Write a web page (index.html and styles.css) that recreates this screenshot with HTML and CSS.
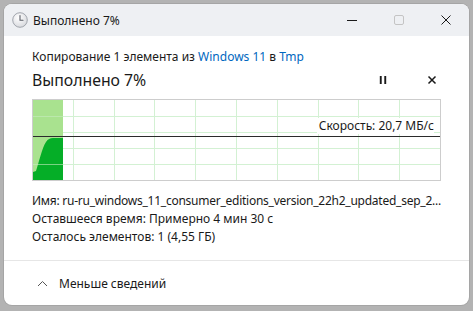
FILE: index.html
```html
<!DOCTYPE html>
<html lang="ru">
<head>
  <meta charset="UTF-8">
  <title>Выполнено 7%</title>
  <link rel="stylesheet" href="styles.css">
</head>
<body>
  <div class="window">
    <!-- Title bar -->
    <div class="titlebar">
      <svg class="app-icon" width="16" height="16" viewBox="0 0 16 16">
        <defs>
          <radialGradient id="face" cx="40%" cy="35%" r="70%">
            <stop offset="0" stop-color="#ffffff"/>
            <stop offset="1" stop-color="#d6d8dc"/>
          </radialGradient>
        </defs>
        <circle cx="8" cy="8" r="7.3" fill="url(#face)" stroke="#9a9ea6" stroke-width="0.9"/>
        <path d="M8 3.6V8.3H11" fill="none" stroke="#5a5e66" stroke-width="1.1" stroke-linecap="round"/>
      </svg>
      <span class="title">Выполнено 7%</span>
      <div class="caption-buttons">
        <span class="cap-btn">
          <svg width="10" height="10" viewBox="0 0 10 10"><path d="M0 5.5H10" stroke="#1a1a1a" stroke-width="1"/></svg>
        </span>
        <span class="cap-btn">
          <svg width="10" height="10" viewBox="0 0 10 10"><rect x="0.5" y="0.5" width="9" height="9" rx="1.5" fill="none" stroke="#c4c4c4" stroke-width="1"/></svg>
        </span>
        <span class="cap-btn">
          <svg width="10" height="10" viewBox="0 0 10 10"><path d="M0.5 0.5L9.5 9.5M9.5 0.5L0.5 9.5" stroke="#1a1a1a" stroke-width="1"/></svg>
        </span>
      </div>
    </div>

    <!-- Copy progress -->
    <div class="content">
      <p class="source">Копирование 1 элемента из <span class="link">Windows 11</span> в <span class="link">Tmp</span></p>
      <div class="heading-row">
        <h1 class="heading">Выполнено 7%</h1>
        <div class="actions">
          <svg width="10" height="10" viewBox="0 0 10 10"><rect x="1.8" y="1" width="1.9" height="8" fill="#1a1a1a"/><rect x="6.3" y="1" width="1.9" height="8" fill="#1a1a1a"/></svg>
          <svg width="10" height="10" viewBox="0 0 10 10"><path d="M1.5 1.5L8.5 8.5M8.5 1.5L1.5 8.5" stroke="#1a1a1a" stroke-width="1.5"/></svg>
        </div>
      </div>

      <div class="graph">
        <svg class="graph-canvas" width="407" height="80" viewBox="0 0 407 80">
          <rect x="0" y="0" width="30" height="80" fill="#a9e28f"/>
          <path d="M0 80V72L3 71C6 62 9 48 13 42C15 39 17 38 20 38L30 38V80Z" fill="#05ae27"/>
          <g stroke="#d3f1d3" stroke-width="1">
            <path d="M40.5 0V80M81.5 0V80M121.5 0V80M162.5 0V80M203.5 0V80M244.5 0V80M285.5 0V80M325.5 0V80M366.5 0V80"/>
            <path d="M30 16.5H407M30 32.5H407M30 48.5H407M30 64.5H407"/>
          </g>
          <g stroke="#c8ecc0" stroke-width="1" opacity="0.6">
            <path d="M0 16.5H30M0 64.5H30"/>
          </g>
          <path d="M0 36.5H407" stroke="#2b2b2b" stroke-width="1.2"/>
        </svg>
        <span class="speed">Скорость: 20,7 МБ/с</span>
      </div>

      <div class="details">
        <p class="name">Имя: ru-ru_windows_11_consumer_editions_version_22h2_updated_sep_2...</p>
        <p>Оставшееся время: Примерно 4 мин 30 с</p>
        <p>Осталось элементов: 1 (4,55 ГБ)</p>
      </div>
    </div>

    <!-- Footer -->
    <div class="footer">
      <svg width="11" height="7" viewBox="0 0 11 7"><path d="M1 6L5.5 1.5L10 6" fill="none" stroke="#555" stroke-width="1"/></svg>
      <span>Меньше сведений</span>
    </div>
  </div>
</body>
</html>
```

FILE: styles.css
```css
/* Page */
body {
  margin: 0;
  padding: 4px;
  width: 473px;
  height: 311px;
  box-sizing: border-box;
  background-color: #b3b3b3;
  font-family: 'Noto Sans', 'Open Sans', sans-serif;
  color: #1a1a1a;
  overflow: hidden;
}

p {
  margin: 0;
}

/* Window */
.window {
  width: 465px;
  height: 301px;
  background-color: #fff;
  border-radius: 8px;
  overflow: hidden;
  display: flex;
  flex-direction: column;
  box-shadow: 0 0 0 1px rgba(0, 0, 0, 0.08);
}

/* Title bar */
.titlebar {
  height: 32px;
  flex: none;
  display: flex;
  align-items: center;
  background-color: #eef0f3;
  padding-left: 8px;
}

.app-icon {
  flex: none;
}

.title {
  font-size: 12px;
  margin-left: 5px;
  flex: 1;
}

.caption-buttons {
  display: flex;
  height: 100%;
}

.cap-btn {
  width: 47px;
  display: flex;
  align-items: center;
  justify-content: center;
}

/* Content */
.content {
  padding: 12px 28px 0 28px;
  flex: 1;
}

.source {
  font-size: 12px;
  line-height: 17px;
}

.link {
  color: #0067c0;
}

.heading-row {
  display: flex;
  align-items: center;
  margin-top: 4px;
  height: 22px;
}

.heading {
  flex: 1;
  margin: 0;
  font-size: 15.8px;
  font-weight: normal;
  line-height: 22px;
}

.actions {
  display: flex;
  gap: 39px;
  margin-right: 4px;
}

/* Transfer graph */
.graph {
  position: relative;
  margin-top: 8px;
  width: 407px;
  height: 80px;
  border: 1px solid #cdcdcd;
}

.graph-canvas {
  display: block;
}

.speed {
  position: absolute;
  right: 6px;
  top: 18px;
  font-size: 12px;
  line-height: 16px;
  padding-left: 2px;
  background-color: #fff;
}

/* Details */
.details {
  margin-top: 11px;
  font-size: 12px;
  line-height: 18px;
}

.name {
  white-space: nowrap;
  letter-spacing: -0.25px;
}

/* Footer */
.footer {
  height: 44px;
  flex: none;
  border-top: 1px solid #e6e6e6;
  display: flex;
  align-items: center;
  padding-left: 33px;
  gap: 11px;
  font-size: 12px;
}
```
